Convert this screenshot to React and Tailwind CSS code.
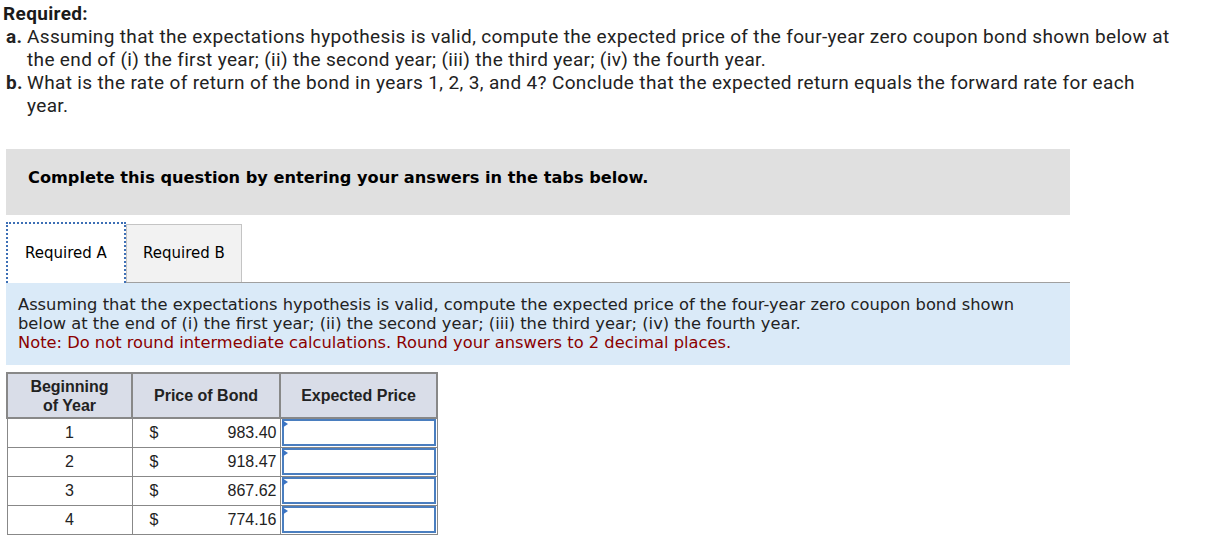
import React from "react";

const rows = [
  { year: "1", price: "983.40" },
  { year: "2", price: "918.47" },
  { year: "3", price: "867.62" },
  { year: "4", price: "774.16" },
];

const App = () => {
  return (
    <div className="min-h-[544px] w-[1218px] bg-white text-[#222]">
      {/* Required */}
      <div className="pl-[3px] pt-[2px] text-[19px] leading-[23px] tracking-[0.35px] font-['Roboto',sans-serif] whitespace-nowrap">
        <div className="font-bold text-[#1a1a1a]">Required:</div>
        <div className="flex">
          <span className="w-[24px] shrink-0 pl-[3px] font-bold">a.</span>
          <span>
            Assuming that the expectations hypothesis is valid, compute the expected price of the four-year zero coupon bond shown below at
            <br />
            the end of (i) the first year; (ii) the second year; (iii) the third year; (iv) the fourth year.
          </span>
        </div>
        <div className="flex">
          <span className="w-[24px] shrink-0 pl-[3px] font-bold">b.</span>
          <span>
            What is the rate of return of the bond in years 1, 2, 3, and 4? Conclude that the expected return equals the forward rate for each
            <br />
            year.
          </span>
        </div>
      </div>

      {/* Instructions banner */}
      <div className="ml-[6px] mt-[32px] w-[1064px] h-[66px] bg-[#e0e0e0] pl-[22px] pt-[16px]">
        <span className="font-['DejaVu_Sans',Verdana,sans-serif] font-bold text-[16.2px] leading-[20px] text-black">
          Complete this question by entering your answers in the tabs below.
        </span>
      </div>

      {/* Tabs */}
      <div className="ml-[6px] mt-[7px] w-[1064px] flex items-end border-b border-[#a0a0a0] font-['DejaVu_Sans',Verdana,sans-serif] text-[15px] text-black">
        <div className="w-[120px] h-[61px] -mb-px bg-white border-2 border-dotted border-b-0 border-[#3d6fb5] flex items-center justify-center">
          Required A
        </div>
        <div className="w-[116px] h-[58px] bg-[#f2f2f2] border border-b-0 border-[#c4c4c4] flex items-center justify-center">
          Required B
        </div>
      </div>

      {/* Question text */}
      <div className="ml-[6px] w-[1064px] h-[82px] bg-[#daeaf8] pl-[12px] pt-[12px] font-['DejaVu_Sans',Verdana,sans-serif] text-[16.3px] leading-[19px] text-[#222] whitespace-nowrap">
        <div>
          Assuming that the expectations hypothesis is valid, compute the expected price of the four-year zero coupon bond shown
          <br />
          below at the end of (i) the first year; (ii) the second year; (iii) the third year; (iv) the fourth year.
        </div>
        <div className="text-[#8b0000]">Note: Do not round intermediate calculations. Round your answers to 2 decimal places.</div>
      </div>

      {/* Table */}
      <table className="ml-[6px] mt-[7px] border-collapse font-['Liberation_Sans',Arial,sans-serif] text-[16px] text-[#222]">
        <thead>
          <tr className="bg-[#d9dde8] h-[45px]">
            <th className="w-[125px] border-2 border-[#888] font-bold leading-[19px] text-center">
              Beginning
              <br />
              of Year
            </th>
            <th className="w-[148px] border-2 border-[#888] font-bold text-center">Price of Bond</th>
            <th className="w-[157px] border-2 border-[#888] font-bold text-center">Expected Price</th>
          </tr>
        </thead>
        <tbody>
          {rows.map((r) => (
            <tr key={r.year} className="h-[29px]">
              <td className="border border-[#888] text-center">{r.year}</td>
              <td className="border border-[#888] p-0">
                <div className="flex justify-between pl-[17px] pr-[3px]">
                  <span>$</span>
                  <span>{r.price}</span>
                </div>
              </td>
              <td className="border border-[#888] p-0 relative">
                <div className="h-[27px] mx-px border-2 border-[#4a7ebf]" />
                <svg className="absolute left-[1px] top-[1px]" width="6" height="8" viewBox="0 0 6 8">
                  <polygon points="0,0 6,4 0,8" fill="#3b74c2" />
                </svg>
              </td>
            </tr>
          ))}
        </tbody>
      </table>
    </div>
  );
};

export default App;
